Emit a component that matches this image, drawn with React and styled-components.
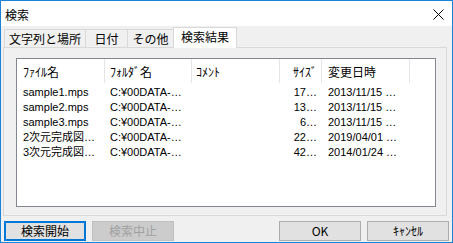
import React from "react";
import styled, { createGlobalStyle } from "styled-components";

const Global = createGlobalStyle`
  html, body { margin: 0; padding: 0; background: #ffffff; }
  body { font-family: "Noto Sans CJK JP", "Noto Sans", sans-serif; font-size: 12px; color: #000; }
  * { box-sizing: border-box; }
`;

const Window = styled.div`
  width: 453px;
  height: 243px;
  border: 1px solid #1883d7;
  background: #f0f0f0;
  display: flex;
  flex-direction: column;
  overflow: hidden;
`;

const TitleBar = styled.div`
  height: 25px;
  background: #ffffff;
  display: flex;
  align-items: center;
  justify-content: space-between;
  padding: 0 8px 0 4px;
  flex-shrink: 0;
`;

const Title = styled.span`
  font-size: 12px;
  line-height: 25px;
  padding-top: 1px;
`;

const Close = styled.svg`
  width: 11px;
  height: 11px;
  display: block;
  margin-top: 1px;
`;

const Body = styled.div`
  flex: 1;
  display: flex;
  flex-direction: column;
  padding: 2px 5px 0 2px;
`;

const TabStrip = styled.div`
  height: 20px;
  display: flex;
  align-items: flex-end;
  padding-left: 1px;
  position: relative;
  z-index: 1;
  margin-bottom: -1px;
`;

const Tab = styled.div`
  width: ${(p) => p.$w}px;
  height: ${(p) => (p.$active ? 21 : 19)}px;
  margin-left: ${(p) => (p.$first ? 0 : -1)}px;
  border: 1px solid #d9d9d9;
  border-bottom: ${(p) => (p.$active ? "none" : "1px solid #d9d9d9")};
  background: ${(p) => (p.$active ? "#ffffff" : "#f0f0f0")};
  display: flex;
  align-items: center;
  justify-content: center;
  font-size: 12px;
  line-height: 1;
  padding-top: ${(p) => (p.$active ? 0 : 1)}px;
  padding-bottom: ${(p) => (p.$active ? 2 : 0)}px;
`;

const Panel = styled.div`
  height: 169px;
  border: 1px solid #d9d9d9;
  background: #f0f0f0;
  padding: 10px 10px 8px 12px;
  display: flex;
`;

const ListBox = styled.div`
  flex: 1;
  border: 1px solid #828790;
  background: #ffffff;
  display: flex;
  flex-direction: column;
`;

const HeaderRow = styled.div`
  height: 24px;
  display: flex;
`;

const HeaderCell = styled.div`
  width: ${(p) => p.$w}px;
  flex-shrink: 0;
  height: 24px;
  border-right: 1px solid #e5e5e5;
  display: flex;
  align-items: center;
  justify-content: ${(p) => (p.$right ? "flex-end" : "flex-start")};
  padding: 0 ${(p) => (p.$right ? 4 : 0)}px 0 ${(p) => (p.$right ? 0 : p.$pl)}px;
  white-space: nowrap;
  font-size: 12px;
`;

const Rows = styled.div`
  padding-top: 2px;
  display: flex;
  flex-direction: column;
`;

const Row = styled.div`
  height: 15px;
  display: flex;
  align-items: center;
`;

const Cell = styled.div`
  width: ${(p) => p.$w}px;
  flex-shrink: 0;
  overflow: hidden;
  white-space: nowrap;
  text-align: ${(p) => (p.$right ? "right" : "left")};
  padding: 0 ${(p) => (p.$right ? 5 : 0)}px 0 ${(p) => (p.$right ? 0 : p.$pl)}px;
  font-family: "Liberation Sans", "Noto Sans CJK JP", sans-serif;
  font-size: 11px;
  line-height: 15px;
`;

const ButtonRow = styled.div`
  display: flex;
  margin: 5px -2px 0 1px;
  height: 20px;
  gap: 6px;
`;

const Spacer = styled.div`
  flex: 1;
`;

const Button = styled.div`
  width: 82px;
  height: 20px;
  display: flex;
  align-items: center;
  justify-content: center;
  font-size: 12px;
  line-height: 1;
  background: ${(p) => (p.$disabled ? "#cccccc" : "#e1e1e1")};
  border: ${(p) =>
    p.$default ? "2px solid #0078d7" : p.$disabled ? "1px solid #bfbfbf" : "1px solid #adadad"};
  color: ${(p) => (p.$disabled ? "#a0a0a0" : "#000")};
`;

const cols = [88, 87, 88, 42, 88];

const headers = [
  { t: "ﾌｧｲﾙ名", pl: 6 },
  { t: "ﾌｫﾙﾀﾞ名", pl: 5 },
  { t: "ｺﾒﾝﾄ", pl: 4 },
  { t: "ｻｲｽﾞ", right: true },
  { t: "変更日時", pl: 6 },
];

const rows = [
  ["sample1.mps", "C:¥00DATA-…", "", "17…", "2013/11/15 …"],
  ["sample2.mps", "C:¥00DATA-…", "", "13…", "2013/11/15 …"],
  ["sample3.mps", "C:¥00DATA-…", "", "6…", "2013/11/15 …"],
  ["2次元完成図…", "C:¥00DATA-…", "", "22…", "2019/04/01 …"],
  ["3次元完成図…", "C:¥00DATA-…", "", "42…", "2014/01/24 …"],
];

const tabs = [
  { t: "文字列と場所", w: 82 },
  { t: "日付", w: 43 },
  { t: "その他", w: 47 },
  { t: "検索結果", w: 64, active: true },
];

export default function App() {
  return (
    <>
      <Global />
      <Window>
        <TitleBar>
          <Title>検索</Title>
          <Close viewBox="0 0 11 11">
            <path d="M0.5 0.5 L10.5 10.5 M10.5 0.5 L0.5 10.5" stroke="#000" strokeWidth="1" fill="none" />
          </Close>
        </TitleBar>
        <Body>
          <TabStrip>
            {tabs.map((t, i) => (
              <Tab key={t.t} $w={t.w} $active={t.active} $first={i === 0}>
                {t.t}
              </Tab>
            ))}
          </TabStrip>
          <Panel>
            <ListBox>
              <HeaderRow>
                {headers.map((h, i) => (
                  <HeaderCell key={h.t} $w={cols[i]} $right={h.right} $pl={h.pl}>
                    {h.t}
                  </HeaderCell>
                ))}
              </HeaderRow>
              <Rows>
                {rows.map((r, ri) => (
                  <Row key={ri}>
                    {r.map((c, ci) => (
                      <Cell key={ci} $w={cols[ci]} $right={ci === 3} $pl={headers[ci].pl}>
                        {c}
                      </Cell>
                    ))}
                  </Row>
                ))}
              </Rows>
            </ListBox>
          </Panel>
          <ButtonRow>
            <Button $default>検索開始</Button>
            <Button $disabled>検索中止</Button>
            <Spacer />
            <Button>OK</Button>
            <Button>ｷｬﾝｾﾙ</Button>
          </ButtonRow>
        </Body>
      </Window>
    </>
  );
}
